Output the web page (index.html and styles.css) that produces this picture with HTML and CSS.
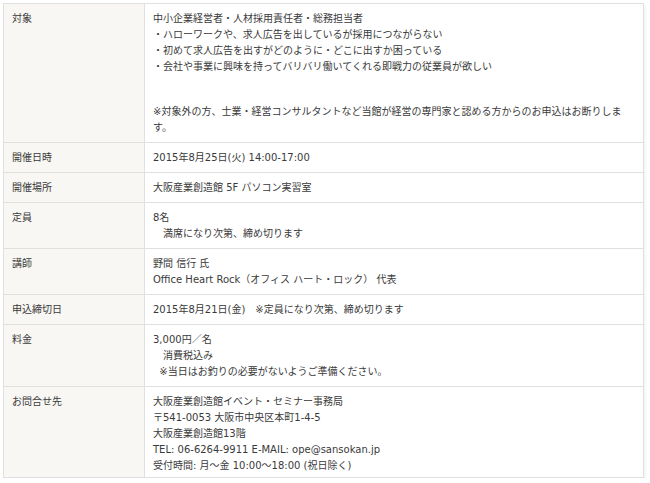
FILE: index.html
```html
<!DOCTYPE html>
<html lang="ja">
<head>
<meta charset="utf-8">
<link rel="stylesheet" href="styles.css">
</head>
<body>
<table class="info">
  <tr>
    <th>対象</th>
    <td>
      <div>中小企業経営者・人材採用責任者・総務担当者<br>・ハローワークや、求人広告を出しているが採用につながらない<br>・初めて求人広告を出すがどのように・どこに出すか困っている<br>・会社や事業に興味を持ってバリバリ働いてくれる即戦力の従業員が欲しい</div>
      <div class="note">※対象外の方、士業・経営コンサルタントなど当館が経営の専門家と認める方からのお申込はお断りします。</div>
    </td>
  </tr>
  <tr>
    <th>開催日時</th>
    <td>2015年8月25日(火) 14:00-17:00</td>
  </tr>
  <tr>
    <th>開催場所</th>
    <td>大阪産業創造館 5F パソコン実習室</td>
  </tr>
  <tr>
    <th>定員</th>
    <td>8名<br>　満席になり次第、締め切ります</td>
  </tr>
  <tr>
    <th>講師</th>
    <td>野間 信行 氏<br>Office Heart Rock（オフィス ハート・ロック） 代表</td>
  </tr>
  <tr>
    <th>申込締切日</th>
    <td>2015年8月21日(金)　※定員になり次第、締め切ります</td>
  </tr>
  <tr>
    <th>料金</th>
    <td>3,000円／名<br>　消費税込み<br>&nbsp;&nbsp;※当日はお釣りの必要がないようご準備ください。</td>
  </tr>
  <tr class="last">
    <th>お問合せ先</th>
    <td>大阪産業創造館イベント・セミナー事務局<br>〒541-0053 大阪市中央区本町1-4-5<br>大阪産業創造館13階<br>TEL: 06-6264-9911 E-MAIL: ope@sansokan.jp<br>受付時間: 月～金 10:00～18:00 (祝日除く)</td>
  </tr>
</table>
</body>
</html>
```

FILE: styles.css
```css
html, body {
  margin: 0;
  background: #ffffff;
}
body {
  padding: 3px 6px 0 3px;
  font-family: "DejaVu Sans", "Noto Sans CJK JP", sans-serif;
  font-size: 10px;
  line-height: 16px;
  color: #3a3a3a;
}
.info {
  width: 641px;
  border-collapse: collapse;
  border: 1px solid #dcdcdc;
  box-shadow: 2px 2px 2px rgba(0, 0, 0, 0.04);
}
.info th,
.info td {
  border: 1px solid #e0e0e0;
  padding: 7px 8px 6px 8px;
  vertical-align: top;
  text-align: left;
  font-weight: normal;
}
.info th {
  width: 124px;
  background: #f8f7f3;
}
.info td {
  background: #ffffff;
}
.info .last th,
.info .last td {
  padding-bottom: 3px;
}
.note {
  margin-top: 29px;
}
```
